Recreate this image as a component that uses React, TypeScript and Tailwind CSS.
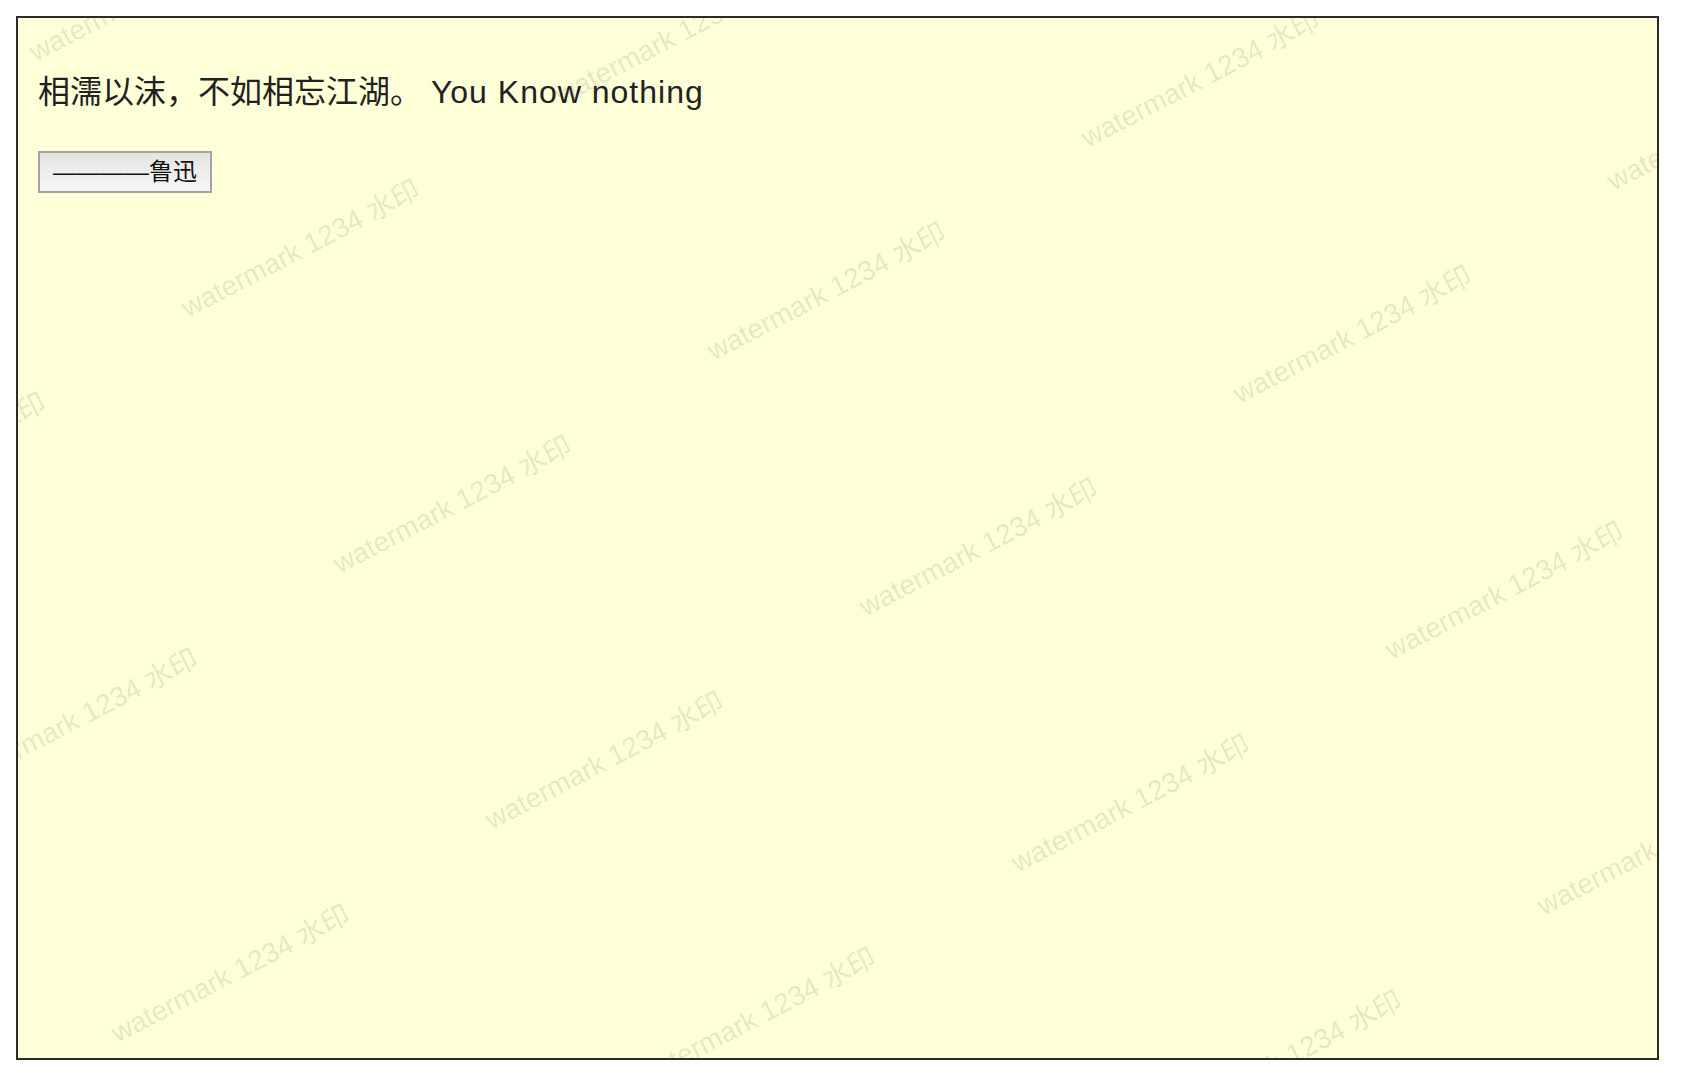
import React from 'react';

// watermark lattice, measured from the reference (baseline start of each label)
const ORIGIN = { x: 188, y: 319 };
const STEP_A = { x: 526, y: 43 };
const STEP_B = { x: 152, y: 256 };

const marks: { x: number; y: number }[] = [];
for (let i = -3; i <= 4; i++) {
    for (let j = -2; j <= 5; j++) {
        const x = ORIGIN.x + i * STEP_A.x + j * STEP_B.x;
        const y = ORIGIN.y + i * STEP_A.y + j * STEP_B.y;
        if (x > -320 && x < 1680 && y > 0 && y < 1200) marks.push({ x, y });
    }
}

const Watermark = () => {
    return (
        <div className="absolute inset-0 overflow-hidden pointer-events-none select-none">
            {marks.map((m, k) => (
                <span
                    key={k}
                    className="absolute whitespace-nowrap text-[28px] leading-none text-[rgba(0,0,0,0.11)] origin-[0_24px] rotate-[-27.5deg] font-['Liberation_Sans','Noto_Sans_CJK_SC',sans-serif]"
                    style={{ left: m.x - 18, top: m.y - 18 - 24 }}
                >
                    watermark 1234 水印
                </span>
            ))}
        </div>
    );
};

const App = () => {
    return (
        <div className="w-[1690px] h-[1088px] bg-white pt-4 pl-4 font-['Liberation_Sans','Noto_Sans_CJK_SC',sans-serif]">
            <div className="relative w-[1643px] h-[1044px] border-2 border-[#2b2b2b] bg-[#ffffd8] p-5">
                <p className="mt-8 text-[32px] leading-[45px] text-[#222]">
                    相濡以沫，不如相忘江湖。 <span className="tracking-[1px]">You Know nothing</span>
                </p>
                <button className="mt-[36px] flex items-center whitespace-nowrap h-[42px] w-[174px] px-[13px] border-2 border-[#a4a4a4] bg-gradient-to-b from-[#e4e4e4] to-[#f6f6f6] text-[24px] leading-none text-[#111]">
                    ————鲁迅
                </button>
                <Watermark />
            </div>
        </div>
    );
};

export default App;
